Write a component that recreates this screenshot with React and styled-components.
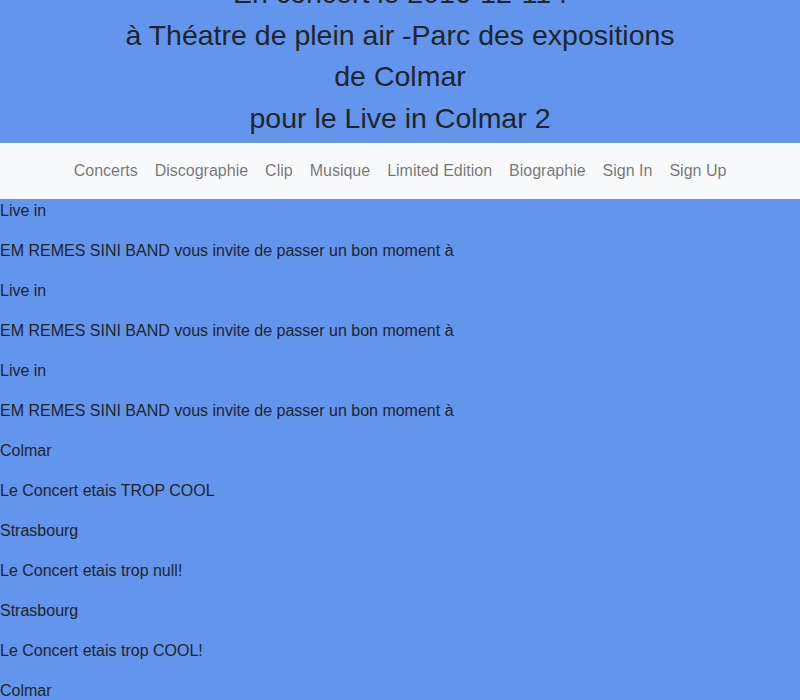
import React from "react";
import styled, {createGlobalStyle} from "styled-components";

const colors = {
    blue: '#6495ED', light: '#f8f9fa', text: '#212529', link: 'rgba(0, 0, 0, 0.55)',
}

const GlobalStyle = createGlobalStyle`
  html, body {
    margin: 0;
    padding: 0;
    background-color: ${colors.blue};
    color: ${colors.text};
    font-family: "Liberation Sans", Arial, sans-serif;
    font-size: 16px;
    line-height: 1.5;
  }
`

const links = ['Concerts', 'Discographie', 'Clip', 'Musique', 'Limited Edition', 'Biographie', 'Sign In', 'Sign Up']

const posts = [
    'Live in',
    'EM REMES SINI BAND vous invite de passer un bon moment à',
    'Live in',
    'EM REMES SINI BAND vous invite de passer un bon moment à',
    'Live in',
    'EM REMES SINI BAND vous invite de passer un bon moment à',
    'Colmar',
    'Le Concert etais TROP COOL',
    'Strasbourg',
    'Le Concert etais trop null!',
    'Strasbourg',
    'Le Concert etais trop COOL!',
    'Colmar',
    'Le Concert etais trop cool',
]

export default function App() {
    return (
        <>
            <GlobalStyle/>
            <Banner>
                <Title>
                    En concert le 2016-12-11 !<br/>
                    à Théatre de plein air -Parc des expositions<br/>
                    de Colmar<br/>
                    pour le Live in Colmar 2
                </Title>
            </Banner>
            <Navbar>
                <NavList>
                    {links.map((l) => (
                        <li key={l}><NavLink href="#">{l}</NavLink></li>
                    ))}
                </NavList>
            </Navbar>
            <Feed>
                {posts.map((p, i) => <p key={i}>{p}</p>)}
            </Feed>
        </>
    );
}

const Banner = styled.header`
  background-color: ${colors.blue};
  margin-top: -27px;
  padding-bottom: 4px;
`

const Title = styled.h3`
  margin: 0;
  text-align: center;
  font-size: 28.5px;
  font-weight: 400;
  line-height: 41.5px;
`

const Navbar = styled.nav`
  background-color: ${colors.light};
  padding: 8px 16px;
  display: flex;
  justify-content: center;
`

const NavList = styled.ul`
  list-style: none;
  margin: 0;
  padding: 0;
  display: flex;
`

const NavLink = styled.a`
  display: block;
  padding: 8px 8.5px;
  color: ${colors.link};
  text-decoration: none;
`

const Feed = styled.main`
  p {
    margin: 0 0 16px;
  }
`
